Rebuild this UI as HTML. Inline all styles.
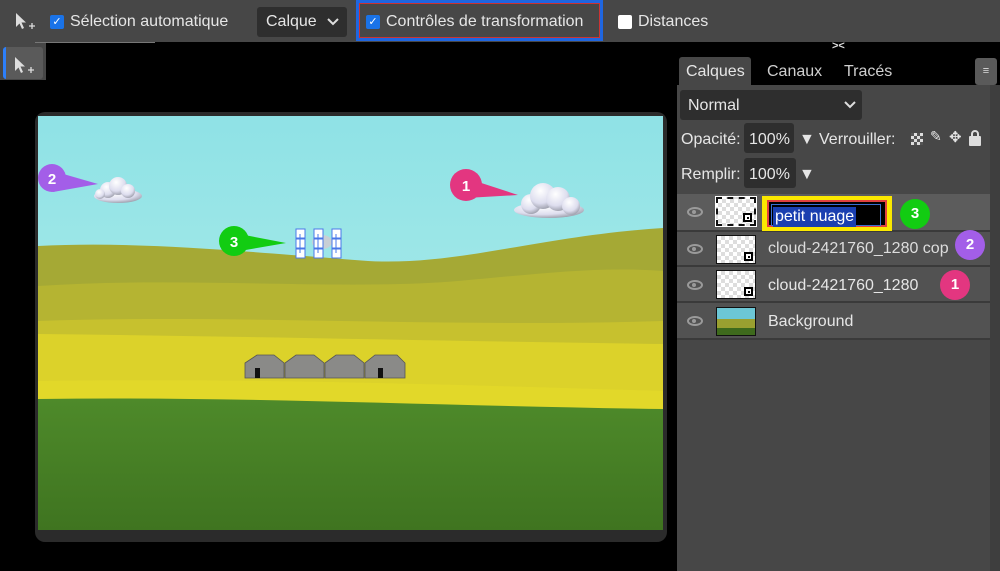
<!DOCTYPE html>
<html><head><meta charset="utf-8"><style>
*{margin:0;padding:0;box-sizing:border-box}
body{width:1000px;height:571px;background:#000;position:relative;overflow:hidden;font-family:"Liberation Sans","DejaVu Sans",sans-serif;color:#ddd}
.a{position:absolute}
.cb{position:absolute;width:14px;height:14px;border-radius:2px;background:#1a73e8;color:#fff;font-size:11px;line-height:14px;text-align:center}
.t{font-size:16px;color:#e6e6e6;position:absolute;white-space:nowrap}
.row{position:absolute;left:677px;width:313px;background:#525252;border-bottom:2px solid #3a3a3a}
.eye{position:absolute;left:10px;width:16px;height:10px;border:2px solid #9a9a9a;border-radius:50%}
.eye:after{content:"";position:absolute;left:3px;top:1px;width:4px;height:4px;border-radius:50%;background:#9a9a9a}
.th{position:absolute;left:39px;width:40px;height:29px;border:1px solid #111;background-color:#fff;background-image:linear-gradient(45deg,#ddd 25%,transparent 25%,transparent 75%,#ddd 75%),linear-gradient(45deg,#ddd 25%,transparent 25%,transparent 75%,#ddd 75%);background-size:8px 8px;background-position:0 0,4px 4px}
.mk{position:absolute;right:2px;bottom:2px;width:9px;height:9px;border:2px solid #000;background:#fff}
.mk:after{content:"";position:absolute;left:1.5px;top:1.5px;width:2px;height:2px;background:#000}
.badge{position:absolute;width:30px;height:30px;border-radius:50%;color:#fff;font-weight:bold;font-size:15px;line-height:30px;text-align:center}
</style></head><body>
<div class="a" style="left:0;top:0;width:1000px;height:42px;background:#474747"></div>
<div class="a" style="left:0;top:42px;width:46px;height:38px;background:#474747"></div>
<div class="a" style="left:3px;top:47px;width:40px;height:32px;background:#5a5a5a;border-left:3px solid #2d7ff9;border-radius:3px"></div>
<div class="a" style="left:35px;top:42px;width:120px;height:1px;background:#777"></div>
<svg class="a" style="left:14px;top:12px" width="22" height="20"><path d="M2 1 L2 15 L5.5 11.5 L8 17 L10 16 L7.5 10.5 L12 10.5 Z" fill="#ddd"/><path d="M15 14h6M18 11v6" stroke="#ddd" stroke-width="1.3"/></svg>
<svg class="a" style="left:13px;top:56px" width="22" height="20"><path d="M2 1 L2 15 L5.5 11.5 L8 17 L10 16 L7.5 10.5 L12 10.5 Z" fill="#ddd"/><path d="M15 14h6M18 11v6" stroke="#ddd" stroke-width="1.3"/></svg>
<div class="cb" style="left:50px;top:15px">✓</div>
<div class="t" style="left:70px;top:13px">Sélection automatique</div>
<div class="a" style="left:257px;top:7px;width:90px;height:30px;background:#2e2e2e;border-radius:3px"></div>
<div class="t" style="left:266px;top:13px">Calque</div>
<svg class="a" style="left:327px;top:18px" width="12" height="8"><path d="M1 1l5 5 5-5" stroke="#ddd" stroke-width="2" fill="none"/></svg>
<div class="a" style="left:356px;top:0;width:247px;height:41px;border:3px solid #1f66e0;box-shadow:inset 0 0 0 1px #c33"></div>
<div class="cb" style="left:366px;top:15px">✓</div>
<div class="t" style="left:386px;top:13px">Contrôles de transformation</div>
<div class="a" style="left:618px;top:15px;width:14px;height:14px;background:#fff;border-radius:2px"></div>
<div class="t" style="left:638px;top:13px">Distances</div>

<div class="a" style="left:35px;top:112px;width:632px;height:430px;background:#2b2b2b;border-radius:10px"></div>
<svg class="a" style="left:38px;top:116px" width="625" height="414">
<defs>
<linearGradient id="sky" x1="0" y1="0" x2="0" y2="1"><stop offset="0" stop-color="#8fe2e6"/><stop offset="1" stop-color="#b6efea"/></linearGradient>
<linearGradient id="gr" x1="0" y1="0" x2="0" y2="1"><stop offset="0" stop-color="#4e8a2a"/><stop offset="1" stop-color="#3f7420"/></linearGradient>
<radialGradient id="cl" cx="0.4" cy="0.3" r="0.8"><stop offset="0" stop-color="#fff"/><stop offset="0.6" stop-color="#dde"/><stop offset="1" stop-color="#8a8c98"/></radialGradient>
</defs>
<rect width="625" height="414" fill="url(#sky)"/>
<path d="M0 130 C100 125 200 135 330 145 C420 150 500 120 625 112 L625 414 L0 414Z" fill="#a5a935"/>
<path d="M0 170 C150 160 300 175 420 165 C500 158 560 150 625 155 L625 414 L0 414Z" fill="#b5b432"/>
<path d="M0 205 C200 198 400 212 625 205 L625 414 L0 414Z" fill="#c7c12e"/>
<path d="M0 218 C200 220 400 225 625 228 L625 414 L0 414Z" fill="#dcd22a"/>
<path d="M0 265 C200 262 400 268 625 275 L625 414 L0 414Z" fill="#e2d829"/>
<path d="M0 283 C200 280 400 290 625 293 L625 414 L0 414Z" fill="url(#gr)"/>
<g fill="#8a8a88" stroke="#555" stroke-width="0.8"><path d="M207 262 L207 247 L219 239 L236 239 L246 247 L246 262Z"/><path d="M247 262 L247 247 L258 239 L276 239 L286 247 L286 262Z"/><path d="M287 262 L287 247 L298 239 L316 239 L326 247 L326 262Z"/><path d="M327 262 L327 247 L337 239 L359 239 L367 247 L367 262Z"/></g>
<rect x="217" y="252" width="5" height="10" fill="#111"/><rect x="340" y="252" width="5" height="10" fill="#111"/>
<g fill="url(#cl)"><ellipse cx="80" cy="80" rx="24" ry="7"/><circle cx="70" cy="74" r="8"/><circle cx="80" cy="70" r="9"/><circle cx="90" cy="75" r="7"/><circle cx="62" cy="78" r="5"/></g>
<g fill="url(#cl)"><ellipse cx="511" cy="94" rx="35" ry="8"/><circle cx="493" cy="88" r="10"/><circle cx="505" cy="80" r="13"/><circle cx="520" cy="83" r="12"/><circle cx="533" cy="90" r="9"/></g>
<ellipse cx="284" cy="126" rx="10" ry="7" fill="#c8cfd5"/>
<g fill="#fff" stroke="#4a78e8" stroke-width="1"><rect x="258" y="113" width="9" height="9"/><rect x="276" y="113" width="9" height="9"/><rect x="294" y="113" width="9" height="9"/><rect x="258" y="123" width="9" height="9"/><rect x="276" y="123" width="9" height="9"/><rect x="294" y="123" width="9" height="9"/><rect x="258" y="133" width="9" height="9"/><rect x="276" y="133" width="9" height="9"/><rect x="294" y="133" width="9" height="9"/></g>
<path d="M262 118v19M280 118v19M298 118v19" stroke="#4a78e8"/>
<path d="M15 55 L60 68 L15 76Z" fill="#a35ee8"/><circle cx="14" cy="62" r="14" fill="#a35ee8"/><text x="14" y="68" fill="#fff" font-size="15" font-weight="bold" text-anchor="middle" font-family="Liberation Sans">2</text>
<path d="M428 62 L480 79 L428 82Z" fill="#e33680"/><circle cx="428" cy="69" r="16" fill="#e33680"/><text x="428" y="75" fill="#fff" font-size="15" font-weight="bold" text-anchor="middle" font-family="Liberation Sans">1</text>
<path d="M196 117 L248 127 L196 136Z" fill="#12cc12"/><circle cx="196" cy="125" r="15" fill="#12cc12"/><text x="196" y="131" fill="#fff" font-size="15" font-weight="bold" text-anchor="middle" font-family="Liberation Sans">3</text>
</svg>

<div class="a" style="left:677px;top:55px;width:313px;height:516px;background:#474747"></div>
<div class="a" style="left:990px;top:55px;width:10px;height:516px;background:#3e3e3e"></div>
<div class="a" style="left:832px;top:40px;font-size:11px;color:#ddd;font-weight:bold">&gt;&lt;</div>
<div class="a" style="left:677px;top:55px;width:323px;height:30px;background:#000"></div>
<div class="a" style="left:679px;top:57px;width:72px;height:30px;background:#474747;border-radius:3px 3px 0 0"></div>
<div class="t" style="left:686px;top:63px">Calques</div>
<div class="t" style="left:767px;top:63px;color:#cfcfcf">Canaux</div>
<div class="t" style="left:844px;top:63px;color:#cfcfcf">Tracés</div>
<div class="a" style="left:975px;top:58px;width:22px;height:27px;background:#5a5a5a;border-radius:3px;color:#ddd;font-size:11px;text-align:center;line-height:27px">≡</div>
<div class="a" style="left:680px;top:90px;width:182px;height:30px;background:#2e2e2e;border-radius:3px"></div>
<div class="t" style="left:688px;top:97px">Normal</div>
<svg class="a" style="left:844px;top:101px" width="12" height="8"><path d="M1 1l5 5 5-5" stroke="#ddd" stroke-width="2" fill="none"/></svg>
<div class="t" style="left:681px;top:131px">Opacité:</div>
<div class="a" style="left:744px;top:123px;width:50px;height:30px;background:#2e2e2e;border-radius:3px"></div>
<div class="t" style="left:749px;top:131px">100%</div>
<div class="t" style="left:799px;top:131px">▼</div>
<div class="t" style="left:819px;top:131px">Verrouiller:</div>
<div class="a" style="left:911px;top:133px;width:12px;height:12px;background:repeating-conic-gradient(#ddd 0 25%,#555 0 50%) 0 0/6px 6px"></div>
<div class="t" style="left:930px;top:128px;font-size:14px">✎</div>
<div class="t" style="left:949px;top:128px;font-size:15px">✥</div>
<div class="a" style="left:969px;top:136px;width:12px;height:10px;background:#ddd;border-radius:1px"></div>
<div class="a" style="left:971px;top:130px;width:8px;height:9px;border:2px solid #ddd;border-radius:4px 4px 0 0"></div>
<div class="t" style="left:681px;top:166px">Remplir:</div>
<div class="a" style="left:744px;top:158px;width:52px;height:30px;background:#2e2e2e;border-radius:3px"></div>
<div class="t" style="left:749px;top:166px">100%</div>
<div class="t" style="left:799px;top:166px">▼</div>

<div class="row" style="top:194px;height:38px;background:#5c5c5c"><div class="eye" style="top:13px"></div><div class="th" style="top:3px;border:2px dashed #111;outline:1px solid #fff"><div class="mk"></div></div></div>
<div class="a" style="left:762px;top:196px;width:130px;height:35px;background:#fbe800"></div>
<div class="a" style="left:767px;top:200px;width:120px;height:27px;background:#000;border:2px solid #e04040"></div>
<div class="a" style="left:771px;top:204px;width:110px;height:22px;background:#000;border:1px solid #3a6ed0"></div>
<div class="a" style="left:773px;top:207px;padding:0 2px;background:#1a3fb0;color:#fff;font-size:16px;line-height:20px">petit nuage</div>
<div class="badge" style="left:900px;top:199px;background:#12cc12">3</div>

<div class="row" style="top:232px;height:35px"><div class="eye" style="top:12px"></div><div class="th" style="top:3px"><div class="mk"></div></div></div>
<div class="t" style="left:768px;top:240px;color:#ddd">cloud-2421760_1280 cop</div>
<div class="badge" style="left:955px;top:230px;background:#a35ee8">2</div>

<div class="row" style="top:267px;height:36px"><div class="eye" style="top:13px"></div><div class="th" style="top:3px"><div class="mk"></div></div></div>
<div class="t" style="left:768px;top:277px">cloud-2421760_1280</div>
<div class="badge" style="left:940px;top:270px;background:#e33680">1</div>

<div class="row" style="top:303px;height:37px"><div class="eye" style="top:13px"></div><div class="th" style="top:4px;background:linear-gradient(#6cc7d6 0 40%,#9aa030 40% 75%,#3e6a1c 75%)"></div></div>
<div class="t" style="left:768px;top:313px">Background</div>
</body></html>
